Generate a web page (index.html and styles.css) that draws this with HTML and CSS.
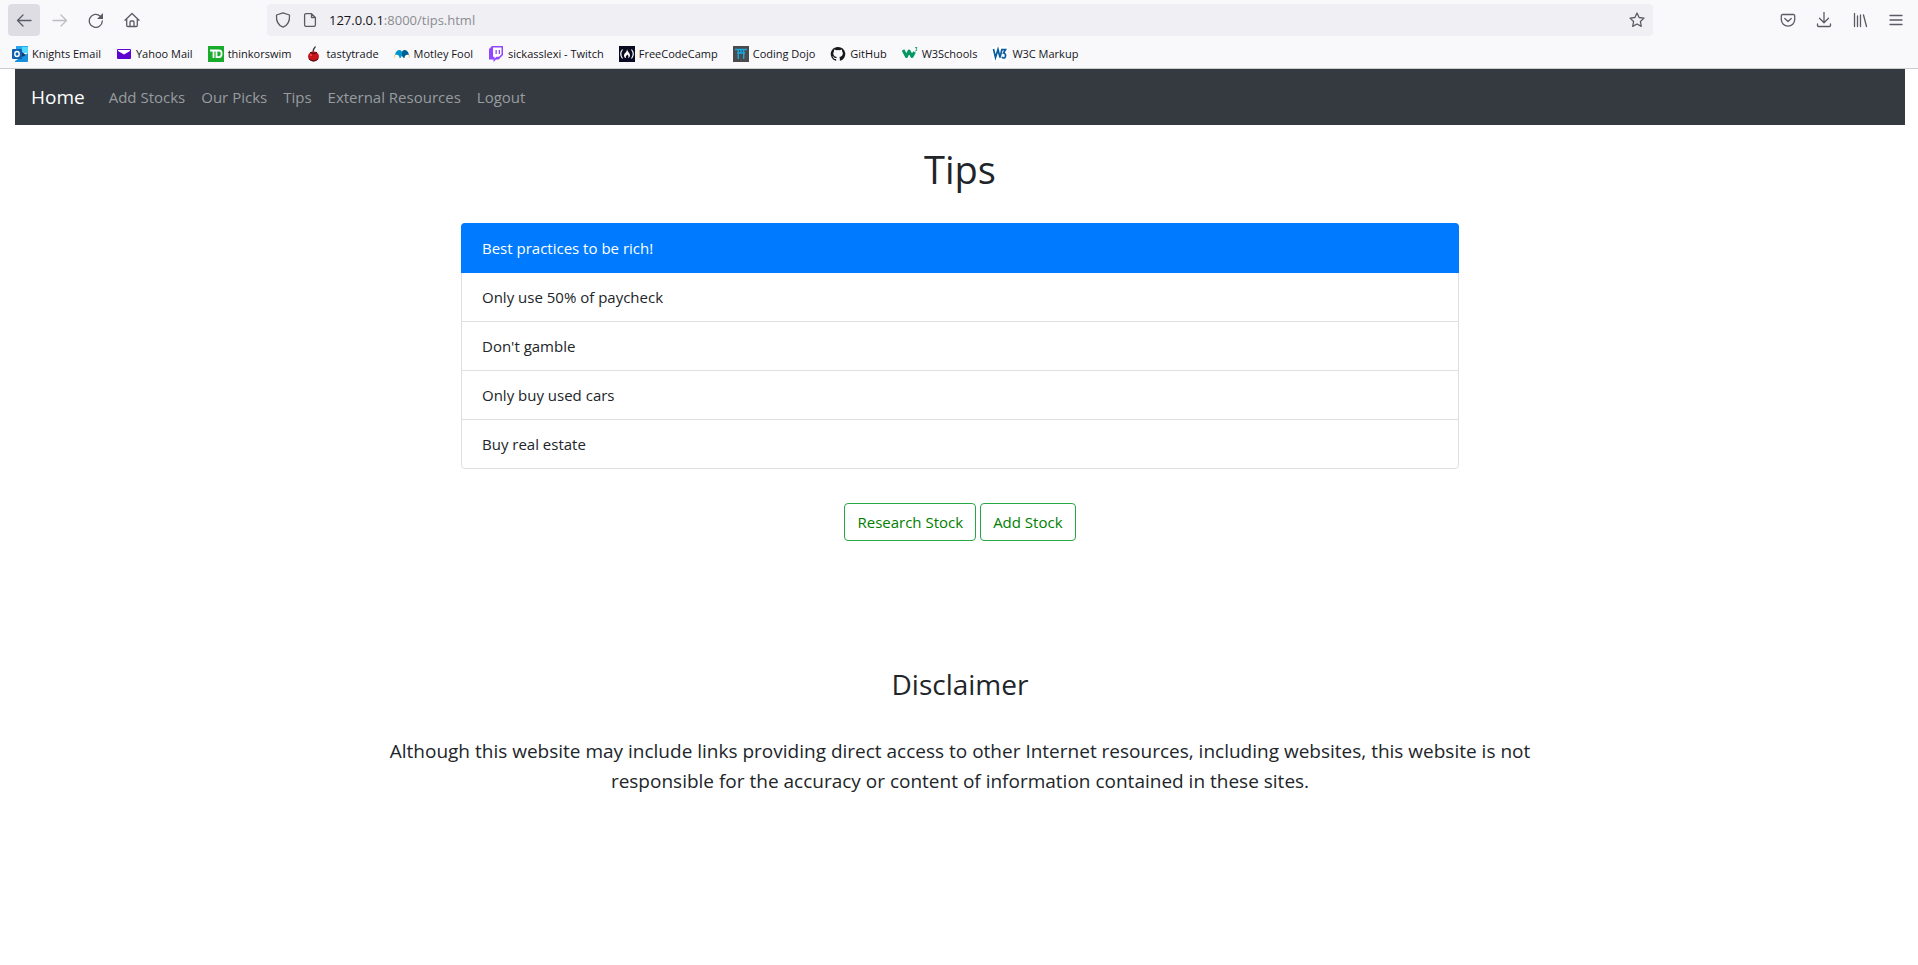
FILE: index.html
```html
<!DOCTYPE html>
<html lang="en">
<head>
<meta charset="utf-8">
<title>Tips</title>
<link rel="stylesheet" href="styles.css">
</head>
<body>
<header class="browser">
  <div class="toolbar">
    <div class="tools">
      <button class="tool tool-active" type="button" aria-label="Back"><svg viewBox="0 0 16 16"><path d="M15 8.500H1.500M7 3L1.500 8.500L7 14"/></svg></button>
      <button class="tool tool-disabled" type="button" aria-label="Forward"><svg viewBox="0 0 16 16"><path d="M1 8.500h13.500M9 3l5.500 5.500L9 14"/></svg></button>
      <button class="tool" type="button" aria-label="Reload"><svg viewBox="0 0 16 16"><path d="M14.300 9A6.500 6.500 0 1 1 12.300 4.200"/><path class="solid" d="M15 1v6H9z"/></svg></button>
      <button class="tool" type="button" aria-label="Home page"><svg viewBox="0 0 16 16"><path d="M1 8.300L8 1.500l7 6.800M2.700 7v6.500a1 1 0 0 0 1 1h8.600a1 1 0 0 0 1-1V7M6 14.500V10a1 1 0 0 1 1-1h2a1 1 0 0 1 1 1v4.500"/></svg></button>
    </div>
    <div class="address">
      <svg class="icon" viewBox="0 0 16 16"><path d="M8 .8L14.500 3c.4 5.500-.8 10-6.500 12.200C2.300 13 1.100 8.500 1.500 3z"/></svg>
      <svg class="icon" viewBox="0 0 16 16"><path d="M9.500 1.600H4a1.400 1.400 0 0 0-1.400 1.400v10A1.400 1.400 0 0 0 4 14.400h8a1.400 1.400 0 0 0 1.400-1.400V5.500zV5.500h3.900"/></svg>
      <div class="url"><span class="host">127.0.0.1</span>:8000/tips.html</div>
      <button class="star" type="button" aria-label="Bookmark this page"><svg class="icon" viewBox="0 0 16 16"><path d="M8 1l2.100 4.500 4.900.6-3.600 3.400.9 4.900L8 12l-4.300 2.400.9-4.900L1 6.100l4.900-.6z"/></svg></button>
    </div>
    <div class="tools tools-end">
      <button class="tool" type="button" aria-label="Pocket"><svg viewBox="0 0 16 16"><path d="M2.500 2.500h11a1.200 1.200 0 0 1 1.200 1.200V7.500a6.700 6.700 0 0 1-13.400 0V3.700a1.200 1.200 0 0 1 1.200-1.200zM4.800 6.500L8 9.500l3.200-3"/></svg></button>
      <button class="tool" type="button" aria-label="Downloads"><svg viewBox="0 0 16 16"><path d="M8 .5v10M3.500 6.300L8 10.700l4.500-4.400M1.500 12v1.500a1 1 0 0 0 1 1h11a1 1 0 0 0 1-1V12"/></svg></button>
      <button class="tool" type="button" aria-label="Library"><svg viewBox="0 0 16 16"><path d="M2.500 1.500v13M5.500 4v10.500M8.500 3v11.500M11.500 3l3 11.500"/></svg></button>
      <button class="tool" type="button" aria-label="Menu"><svg viewBox="0 0 16 16"><path d="M2 3.500h12M2 8h12M2 12.500h12"/></svg></button>
    </div>
  </div>
  <nav class="bookmarks" aria-label="Bookmarks">
    <a href="#"><svg viewBox="0 0 16 16"><path fill="#28a8ea" d="M4 0h12v7H4z"/><path fill="#50d9ff" d="M10 1h6v6h-6z"/><path fill="#0a64ad" d="M4 6h6v5H4z"/><path fill="#1490df" d="M3 15l13-8v8a1 1 0 0 1-1 1H3z"/><path fill="#123b6d" d="M10 6l4 3-4 2z"/><rect fill="#0f5fae" y="3" width="10" height="10" rx="1"/><ellipse cx="5" cy="8" rx="2.200" ry="2.500" fill="none" stroke="#fff" stroke-width="1.400"/></svg>Knights Email</a>
    <a href="#"><svg viewBox="0 0 16 16"><rect x="1" y="3" width="14" height="10" rx="1" fill="#5f01d1"/><path fill="#fff" d="M2 4h12v1L8 8.500 2 5z"/></svg>Yahoo Mail</a>
    <a href="#"><svg viewBox="0 0 16 16"><path fill="#19ac2c" d="M0 0h16v16H0z"/><path fill="none" stroke="#fff" stroke-width="1.800" d="M2 4.500h9M5.500 4v8M8.500 12V4.500H11c3.500 0 3.500 6.600 0 6.600H8"/></svg>thinkorswim</a>
    <a href="#"><svg viewBox="0 0 16 16"><path fill="none" stroke="#333" stroke-width="1.200" d="M7 6C7 4 8 2 9.500.5"/><ellipse cx="7.500" cy="10.500" rx="5.500" ry="5" fill="#c6151c"/><path fill="none" stroke="#3a0a0c" d="M4 6.500Q7.500 8.500 11 6.500M3 13Q7.500 17 12 13"/><circle cx="5" cy="9" r="1" fill="#f55"/></svg>tastytrade</a>
    <a href="#"><svg viewBox="0 0 16 16"><path fill="#0095c8" d="M1 9C1.500 5.500 3.500 4 5.500 4 7 4 8 5 8 6.500V9.500L6.500 12H5.500C5.500 9.500 4 8 1 9z"/><path fill="#005f94" d="M15 9C14.500 5.500 12.500 4 10.500 4 9 4 8 5 8 6.500V10l1.500 2h1C10.500 9.500 12 8 15 9z"/><path fill="#ffd56b" d="M0 9h1.300v2.500H0zM14.700 9H16v2.500h-1.300z"/></svg>Motley Fool</a>
    <a href="#"><svg viewBox="0 0 16 16"><path fill="#9146ff" d="M4 0h11v9l-4.500 4.500H8L5.500 16v-2.500H1V3z"/><path fill="#fff" d="M5 1.500h8.500v6.800L11 10.800H8.500l-2 2v-2H5z"/><path fill="#9146ff" d="M7.500 4h1.300v4H7.500zM10.700 4H12v4h-1.300z"/></svg>sickasslexi - Twitch</a>
    <a href="#"><svg viewBox="0 0 16 16"><path fill="#0a0a23" d="M0 0h16v16H0z"/><path fill="none" stroke="#fff" stroke-width="1.200" d="M3.500 3.500Q0 8 3.500 12.500M12.500 3.500Q16 8 12.500 12.500"/><path fill="#fff" d="M8 3c.5 3 3.200 4 3 6.500-.1 1.500-1 2.500-2 2.500 1-1.500.5-2.500-.8-3.500C7.500 10 6 10.500 7.200 12 5.500 12 5 10.500 5 9.500 5 7 8 6.500 8 3z"/></svg>FreeCodeCamp</a>
    <a href="#"><svg viewBox="0 0 16 16"><path fill="#4b4b4d" d="M0 0h16v16H0z"/><path fill="none" stroke="#16a8e0" stroke-width="1.400" d="M2 3.500h12M4 7h8M5.300 4v9M10.700 4v9M8 4v3"/></svg>Coding Dojo</a>
    <a href="#"><svg viewBox="0 0 16 16"><path fill="#191717" d="M8 1a7 7 0 0 0-2.300 13.700c.4 0 .5-.2.500-.4v-1.400c-2 .4-2.500-.5-2.600-.9-.1-.2-.5-.9-.8-1.100-.3-.1-.7-.5 0-.5s1.100.6 1.300.8c.7 1.200 1.900.9 2.300.7.1-.5.300-.8.500-1-1.800-.2-3.600-.9-3.600-3.700 0-.7.3-1.400.8-1.900-.1-.2-.3-1 .1-1.900 0 0 .7-.2 2.100.8a7 7 0 0 1 3.500 0c1.400-1 2-.8 2-.8.500 1 .2 1.700.2 1.900.4.500.8 1.100.8 1.900 0 2.800-1.800 3.500-3.500 3.700.3.200.5.7.5 1.400v2c0 .2.100.4.500.4A7 7 0 0 0 8 1z"/></svg>GitHub</a>
    <a href="#"><svg viewBox="0 0 16 16"><path fill="none" stroke="#059862" stroke-width="3" stroke-linejoin="round" d="M1 4l3.500 6.500L7 5l3 5.500L12.500 6"/><path fill="none" stroke="#059862" stroke-width=".8" d="M13 1.500h2L14 3q2 .5 0 2h-1"/></svg>W3Schools</a>
    <a href="#"><svg viewBox="0 0 16 16"><path fill="#fff" d="M0 0h16v16H0z"/><path fill="none" stroke="#0a5aa0" stroke-width="1.700" d="M1.500 3l2 8.500L6 3.500 8 11.500 10 3M9.500 3.700h4L11.500 7c3 .5 2.500 5 0 5q-1 0-1.500-1"/></svg>W3C Markup</a>
  </nav>
</header>
<div class="page">
  <nav class="navbar">
    <a class="brand" href="#">Home</a>
    <a href="#">Add Stocks</a>
    <a href="#">Our Picks</a>
    <a href="#">Tips</a>
    <a href="#">External Resources</a>
    <a href="#">Logout</a>
  </nav>
  <main>
    <h1>Tips</h1>
    <ul class="tips">
      <li class="active">Best practices to be rich!</li>
      <li>Only use 50% of paycheck</li>
      <li>Don't gamble</li>
      <li>Only buy used cars</li>
      <li>Buy real estate</li>
    </ul>
    <div class="actions">
      <button type="button">Research Stock</button>
      <button type="button">Add Stock</button>
    </div>
    <section class="disclaimer">
      <h2>Disclaimer</h2>
      <p>Although this website may include links providing direct access to other Internet resources, including websites, this website is not responsible for the accuracy or content of information contained in these sites.</p>
    </section>
  </main>
</div>
</body>
</html>
```
FILE: styles.css
```css
* { box-sizing: border-box; }
body {
  margin: 0;
  background: #fff;
  color: #212529;
  font: 15px/24px "Segoe UI", "Open Sans", "Noto Sans", sans-serif;
}
a { color: inherit; text-decoration: none; }
button { font: inherit; color: inherit; background: none; border: 0; padding: 0; }

/* Browser chrome */
.browser { background: #f9f9fb; border-bottom: 1px solid #cccccc; }
.toolbar { display: flex; align-items: center; padding: 4px 6px 0 8px; }
.tools { display: flex; gap: 4px; width: 259px; }
.tools-end { justify-content: flex-end; }
.tool {
  display: grid;
  place-items: center;
  width: 32px;
  height: 32px;
  border-radius: 4px;
  color: #5b5b66;
}
.tool svg, .icon { width: 16px; height: 16px; fill: none; stroke: currentColor; stroke-width: 1.3; stroke-linecap: round; stroke-linejoin: round; }
.tool .solid { fill: currentColor; stroke: none; }
.tool-active { background: #dddde3; }
.tool-disabled { color: #bdbdc2; }
.address {
  flex: 1;
  display: flex;
  align-items: center;
  gap: 11px;
  height: 32px;
  padding: 0 8px;
  border-radius: 4px;
  background: #f0f0f4;
  color: #5b5b66;
}
.url { flex: 1; font-size: 13px; color: #8b8b92; }
.host { color: #15141a; }
.star { display: grid; }
.bookmarks { display: flex; align-items: center; gap: 15px; height: 32px; padding: 4px 12px 0; }
.bookmarks a { display: flex; align-items: center; gap: 4px; font-size: 11px; line-height: 16px; color: #15141a; white-space: nowrap; }
.bookmarks svg { width: 16px; height: 16px; }

/* Site */
.page { padding: 0 13px 0 15px; }
.navbar {
  display: flex;
  align-items: center;
  gap: 16px;
  height: 56px;
  padding: 2px 16px;
  background: #343a40;
  color: #999c9f;
}
.brand { margin-right: 8px; font-size: 19px; color: #fff; }
main { display: flex; flex-direction: column; align-items: center; }
h1, h2 { margin: 0; font-weight: 400; }
h1 { margin-top: 20px; font-size: 38px; line-height: 48px; }
.tips {
  width: 998px;
  max-width: 100%;
  margin: 30px 0 0;
  padding: 0;
  list-style: none;
  border: 1px solid #dfdfdf;
  border-radius: 4px;
}
.tips li { padding: 12px 20px; }
.tips li + li { border-top: 1px solid #dfdfdf; }
.tips .active { margin: -1px -1px 0; padding: 13px 21px; background: #007bff; color: #fff; border-radius: 4px 4px 0 0; }
.tips .active + li { border-top: 0; }
.actions { display: flex; gap: 4px; margin-top: 34px; }
.actions button { height: 38px; padding: 0 12px; border: 1px solid #28a745; border-radius: 4px; color: #008000; }
.disclaimer { width: 1160px; max-width: 100%; margin-top: 125px; text-align: center; }
h2 { font-size: 28px; line-height: 36px; }
.disclaimer p { margin: 34px 0 0; font-size: 19px; line-height: 30px; }
```
